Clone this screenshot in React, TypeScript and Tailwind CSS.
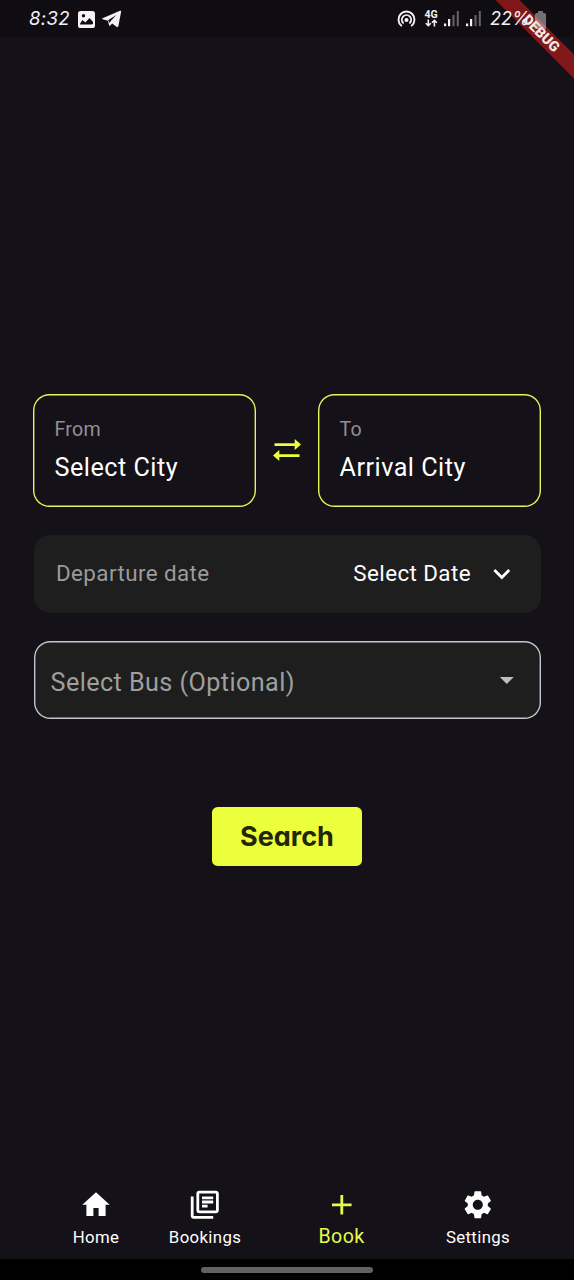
import type { ReactNode } from 'react';
import { MdAdd, MdArrowDropDown, MdKeyboardArrowDown, MdOutlineLibraryBooks, MdSettings } from 'react-icons/md';

function SignalBars() {
  return (
    <svg width="16" height="17" viewBox="0 0 16 17" fill="#f4f2f6">
      <rect x="0" y="13.5" width="2.2" height="2.7" />
      <rect x="4" y="9" width="2.2" height="7.2" />
      <rect x="8.5" y="5" width="2" height="11.2" opacity=".38" />
      <rect x="12.8" y="1" width="2" height="15.2" opacity=".38" />
    </svg>
  );
}

function StatusBar() {
  return (
    <header className="relative z-10 flex h-[37px] shrink-0 items-center pl-[29px] pr-[28px] text-[#f4f2f6]">
      <span className="w-[41px] whitespace-nowrap font-['Inter'] text-[18.5px] leading-none italic tracking-[0.4px]">8:32</span>
      <svg className="ml-2 mt-px" width="17" height="17" viewBox="0 0 17 17">
        <rect width="17" height="17" rx="2.6" fill="#f4f2f6" />
        <path d="m2 12.7 2.5-3.6 2.8 2.5L11.5 7l3.5 4v2l-2 .5H2Z" fill="#0f0d12" />
        <circle cx="5.5" cy="4.8" r="1.7" fill="#0f0d12" />
      </svg>
      <svg className="ml-[7px] mt-px" width="20" height="18" viewBox="0 0 20 18" fill="#f4f2f6">
        <path d="M.5 8.2 18 .8q1.4-.5 1.1 1L16.4 16q-.4 1.8-1.9.8l-4.3-3.2-2 2q-.9.8-1.1-.4L5.9 10.8.7 9.2Q-.3 8.7.5 8.2Z" />
        <path d="m6 10.3 8.4-5.4-5.7 6.2-.8 2Z" fill="#0f0d12" />
      </svg>
      <div className="flex-1" />
      <svg className="mt-px" width="19" height="18" viewBox="0 0 19 18" fill="none" stroke="#f4f2f6" strokeWidth="1.9" strokeLinecap="round">
        <path d="M4.3 15.6a8 8 0 1 1 10.4 0" />
        <path d="M6.1 12.8a4.6 4.6 0 1 1 6.8 0" />
        <circle cx="9.5" cy="10" r="1.1" fill="#f4f2f6" />
      </svg>
      <div className="ml-[8px] flex w-[14px] flex-col items-center">
        <span className="font-['Roboto'] text-[10.5px] leading-[9px] font-bold">4G</span>
        <svg width="13" height="8" viewBox="0 0 13 8" fill="none" stroke="#f4f2f6" strokeWidth="1.6">
          <path d="M3.3.5v6M.8 4.2l2.5 2.5 2.5-2.5M9.4 7.5v-6M6.9 3.8l2.5-2.5 2.5 2.5" />
        </svg>
      </div>
      <div className="ml-[6px] flex gap-[6px]">
        <SignalBars />
        <SignalBars />
      </div>
      <span className="ml-[8px] w-[43px] whitespace-nowrap font-['Inter'] text-[18px] leading-none italic">22%</span>
      <svg className="ml-[2px] mt-[2px]" width="11" height="18" viewBox="0 0 11 18" fill="#d8d0d2" opacity=".5">
        <path d="M3 0h5v2h1.5Q11 2 11 3.6v12.8Q11 18 9.5 18h-8Q0 18 0 16.4V3.6Q0 2 1.5 2H3Z" />
      </svg>
    </header>
  );
}

function DebugBanner() {
  return (
    <div className="pointer-events-none absolute left-[441px] top-[24.5px] flex h-[17px] w-[200px] rotate-45 items-center justify-center bg-[#b71c1cab] text-[14.3px] leading-none font-black text-[#f3e9e9]">
      DEBUG
    </div>
  );
}

function CityCard({ label, value }: { label: string; value: string }) {
  return (
    <button className="flex h-[113px] w-[223px] flex-col items-start rounded-[16.5px] pl-[21.5px] pt-[24.5px] text-left shadow-[inset_0_0_0_1.4px_#e2f75a]">
      <span className="text-[19.6px] leading-[23px] tracking-[0.25px] text-[#909092]">{label}</span>
      <span className="mt-[12px] text-[25.2px] leading-[30px] tracking-[0.5px] text-white">{value}</span>
    </button>
  );
}

function SwapIcon() {
  return (
    <svg width="28" height="22" viewBox="0 0 28 22" fill="#ecff3d">
      <path d="M1.5 4.2h20.2V0L28 5.5 21.7 11V6.9H1.5ZM26.5 15.2H6.3V11L0 16.5 6.3 22v-4.1h20.2Z" />
    </svg>
  );
}

function HomeIcon() {
  return (
    <svg width="34" height="34" viewBox="0 0 34 34" fill="currentColor">
      <path d="M17 4.3 3.3 16.8h4.1v11.3h7V20h5.2v8.1h7V16.8h4.1Z" />
    </svg>
  );
}

function NavItem({ icon, label, active = false, className }: { icon: ReactNode; label: string; active?: boolean; className: string }) {
  return (
    <button className={`flex flex-col items-center ${active ? 'text-[#e6fb4b]' : 'text-white'} ${className}`}>
      {icon}
      <span className={active ? 'mt-[3px] text-[19.6px] leading-[24px] tracking-[0.35px]' : 'mt-[5px] text-[16.8px] leading-[20px] tracking-[0.35px]'}>
        {label}
      </span>
    </button>
  );
}

export default function App() {
  return (
    <div className="relative flex h-[1280px] w-[574px] flex-col overflow-hidden bg-[linear-gradient(#0f0d12_37px,#141118_37px)] font-['Roboto',sans-serif]">
      <DebugBanner />
      <StatusBar />
      <main className="flex flex-1 flex-col items-center pt-[356.5px]">
        <section className="flex items-center gap-[17px]">
          <CityCard label="From" value="Select City" />
          <SwapIcon />
          <CityCard label="To" value="Arrival City" />
        </section>
        <button className="mt-[28px] flex h-[78px] w-[507px] items-center rounded-[16.5px] bg-[#1e1e1e] pl-[22.5px] pr-[22px] text-[22.4px] leading-none tracking-[0.4px]">
          <span className="text-[#9b9b9b]">Departure date</span>
          <span className="ml-auto mr-[14px] text-white">Select Date</span>
          <MdKeyboardArrowDown className="size-[33.6px] text-white" />
        </button>
        <button className="mt-[28.5px] flex h-[78px] w-[507px] items-center justify-between rounded-[16.5px] bg-[#1e1e1e] pl-[17px] pr-[17px] text-[25.2px] leading-none tracking-[0.42px] text-[#9f9f9f] shadow-[inset_0_0_0_1.4px_#c8c3d0]">
          <span className="mt-[5px]">Select Bus (Optional)</span>
          <MdArrowDropDown className="size-[33.6px] text-[#bdbdbd]" />
        </button>
        <button className="mt-[88px] h-[58.5px] w-[150px] rounded-[5.6px] bg-[#ecff3d] font-['Inter'] text-[27px] leading-none font-bold text-[#252507] [font-feature-settings:'cv11']">
          Search
        </button>
      </main>
      <nav className="flex h-[71px] shrink-0 items-start">
        <NavItem className="ml-[56px] w-[80px]" icon={<HomeIcon />} label="Home" />
        <NavItem className="ml-[19px] w-[100px]" icon={<MdOutlineLibraryBooks className="size-[33.6px]" />} label="Bookings" />
        <NavItem active className="ml-[46.5px] w-[80px]" icon={<MdAdd className="size-[33.6px]" />} label="Book" />
        <NavItem className="ml-[46.5px] w-[100px]" icon={<MdSettings className="size-[33.6px]" />} label="Settings" />
      </nav>
      <footer className="flex h-[21px] shrink-0 items-center justify-center bg-black">
        <div className="h-[6px] w-[172px] rounded-full bg-[#626262]" />
      </footer>
    </div>
  );
}
